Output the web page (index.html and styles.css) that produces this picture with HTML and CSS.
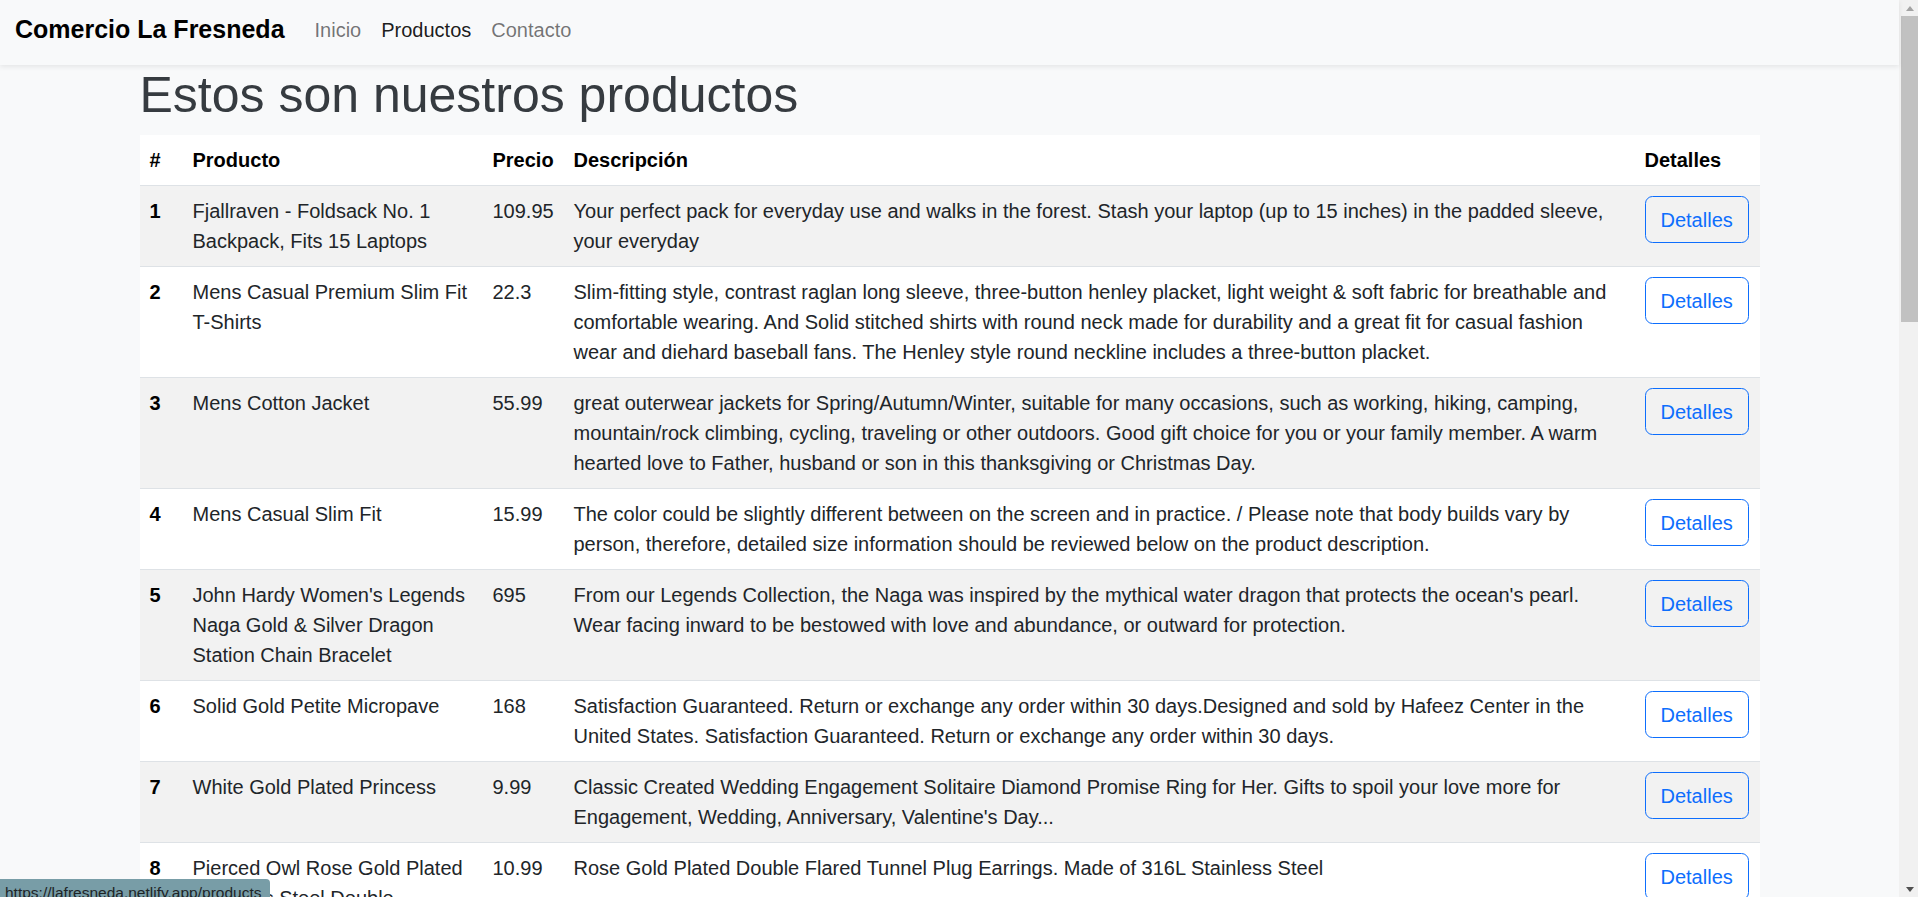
FILE: index.html
```html
<!DOCTYPE html>
<html lang="es">
<head>
<meta charset="utf-8">
<title>Comercio La Fresneda</title>
<link rel="stylesheet" href="styles.css">
</head>
<body>
<div class="page">
  <nav class="navbar">
    <a class="brand" href="#">Comercio La Fresneda</a>
    <a class="nav-link" href="#">Inicio</a>
    <a class="nav-link active" href="#">Productos</a>
    <a class="nav-link" href="#">Contacto</a>
  </nav>
  <main class="container">
    <h1 class="title">Estos son nuestros productos</h1>
    <table class="table">
      <colgroup>
        <col class="c-num"><col class="c-prod"><col class="c-price"><col class="c-desc"><col class="c-det">
      </colgroup>
      <thead>
        <tr><th>#</th><th>Producto</th><th>Precio</th><th>Descripción</th><th>Detalles</th></tr>
      </thead>
      <tbody>
        <tr><th>1</th><td>Fjallraven - Foldsack No. 1 Backpack, Fits 15 Laptops</td><td>109.95</td><td>Your perfect pack for everyday use and walks in the forest. Stash your laptop (up to 15 inches) in the padded sleeve, your everyday</td><td><button class="btn">Detalles</button></td></tr>
        <tr><th>2</th><td>Mens Casual Premium Slim Fit T-Shirts</td><td>22.3</td><td>Slim-fitting style, contrast raglan long sleeve, three-button henley placket, light weight &amp; soft fabric for breathable and comfortable wearing. And Solid stitched shirts with round neck made for durability and a great fit for casual fashion wear and diehard baseball fans. The Henley style round neckline includes a three-button placket.</td><td><button class="btn">Detalles</button></td></tr>
        <tr><th>3</th><td>Mens Cotton Jacket</td><td>55.99</td><td>great outerwear jackets for Spring/Autumn/Winter, suitable for many occasions, such as working, hiking, camping, mountain/rock climbing, cycling, traveling or other outdoors. Good gift choice for you or your family member. A warm hearted love to Father, husband or son in this thanksgiving or Christmas Day.</td><td><button class="btn">Detalles</button></td></tr>
        <tr><th>4</th><td>Mens Casual Slim Fit</td><td>15.99</td><td>The color could be slightly different between on the screen and in practice. / Please note that body builds vary by person, therefore, detailed size information should be reviewed below on the product description.</td><td><button class="btn">Detalles</button></td></tr>
        <tr><th>5</th><td>John Hardy Women's Legends Naga Gold &amp; Silver Dragon Station Chain Bracelet</td><td>695</td><td>From our Legends Collection, the Naga was inspired by the mythical water dragon that protects the ocean's pearl. Wear facing inward to be bestowed with love and abundance, or outward for protection.</td><td><button class="btn">Detalles</button></td></tr>
        <tr><th>6</th><td>Solid Gold Petite Micropave</td><td>168</td><td>Satisfaction Guaranteed. Return or exchange any order within 30 days.Designed and sold by Hafeez Center in the United States. Satisfaction Guaranteed. Return or exchange any order within 30 days.</td><td><button class="btn">Detalles</button></td></tr>
        <tr><th>7</th><td>White Gold Plated Princess</td><td>9.99</td><td>Classic Created Wedding Engagement Solitaire Diamond Promise Ring for Her. Gifts to spoil your love more for Engagement, Wedding, Anniversary, Valentine's Day...</td><td><button class="btn">Detalles</button></td></tr>
        <tr><th>8</th><td>Pierced Owl Rose Gold Plated Stainless Steel Double</td><td>10.99</td><td>Rose Gold Plated Double Flared Tunnel Plug Earrings. Made of 316L Stainless Steel</td><td><button class="btn">Detalles</button></td></tr>
        <tr><th>9</th><td>WD 2TB Elements Portable External Hard Drive - USB 3.0</td><td>64</td><td>USB 3.0 and USB 2.0 Compatibility Fast data transfers Improve PC Performance High Capacity; Compatibility Formatted NTFS for Windows 10, Windows 8.1, Windows 7; Reformatting may be required for other operating systems; Compatibility may vary depending on user’s hardware configuration and operating system</td><td><button class="btn">Detalles</button></td></tr>
        <tr><th>10</th><td>SanDisk SSD PLUS 1TB Internal SSD - SATA III 6 Gb/s</td><td>109</td><td>Easy upgrade for faster boot up, shutdown, application load and response (As compared to 5400 RPM SATA 2.5” hard drive; Based on published specifications and internal benchmarking tests using PCMark vantage scores) Boosts burst write performance, making it ideal for typical PC workloads The perfect balance of performance and reliability Read/write speeds of up to 535MB/s/450MB/s (Based on internal testing; Performance may vary depending upon drive capacity, host device, OS and application.)</td><td><button class="btn">Detalles</button></td></tr>
        <tr><th>11</th><td>Silicon Power 256GB SSD 3D NAND A55 SLC Cache Performance Boost SATA III 2.5</td><td>109</td><td>3D NAND flash are applied to deliver high transfer speeds Remarkable transfer speeds that enable faster bootup and improved overall system performance. The advanced SLC Cache Technology allows performance boost and longer lifespan 7mm slim design suitable for Ultrabooks and Ultra-slim notebooks. Supports TRIM command, Garbage Collection technology, RAID, and ECC (Error Checking &amp; Correction) to provide the optimized performance and enhanced reliability.</td><td><button class="btn">Detalles</button></td></tr>
        <tr><th>12</th><td>WD 4TB Gaming Drive Works with Playstation 4 Portable External Hard Drive</td><td>114</td><td>Expand your PS4 gaming experience, Play anywhere Fast and easy, setup Sleek design with high capacity, 3-year manufacturer's limited warranty</td><td><button class="btn">Detalles</button></td></tr>
        <tr><th>13</th><td>Acer SB220Q bi 21.5 inches Full HD (1920 x 1080) IPS Ultra-Thin</td><td>599</td><td>21. 5 inches Full HD (1920 x 1080) widescreen IPS display And Radeon free Sync technology. No compatibility for VESA Mount Refresh Rate: 75Hz - Using HDMI port Zero-frame design | ultra-thin | 4ms response time | IPS panel Aspect ratio - 16: 9. Color Supported - 16. 7 million colors. Brightness - 250 nit Tilt angle -5 degree to 15 degree. Horizontal viewing angle-178 degree. Vertical viewing angle-178 degree 75 hertz</td><td><button class="btn">Detalles</button></td></tr>
        <tr><th>14</th><td>Samsung 49-Inch CHG90 144Hz Curved Gaming Monitor (LC49HG90DMNXZA) – Super Ultrawide Screen QLED</td><td>999.99</td><td>49 INCH SUPER ULTRAWIDE 32:9 CURVED GAMING MONITOR with dual 27 inch screen side by side QUANTUM DOT (QLED) TECHNOLOGY, HDR support and factory calibration provides stunningly realistic and accurate color and contrast 144HZ HIGH REFRESH RATE and 1ms ultra fast response time work to eliminate motion blur, ghosting, and reduce input lag</td><td><button class="btn">Detalles</button></td></tr>
        <tr><th>15</th><td>BIYLACLESEN Women's 3-in-1 Snowboard Jacket Winter Coats</td><td>56.99</td><td>Note:The Jackets is US standard size, Please choose size as your usual wear Material: 100% Polyester; Detachable Liner Fabric: Warm Fleece. Detachable Functional Liner: Skin Friendly, Lightweigt and Warm.Stand Collar Liner jacket, keep you warm in cold weather.</td><td><button class="btn">Detalles</button></td></tr>
        <tr><th>16</th><td>Lock and Love Women's Removable Hooded Faux Leather Moto Biker Jacket</td><td>29.95</td><td>100% POLYURETHANE(shell) 100% POLYESTER(lining) 75% POLYESTER 25% COTTON (SWEATER), Faux leather material for style and comfort / 2 pockets of front, 2-For-One Hooded denim style faux leather jacket, Button detail on waist / Detail stitching at sides, HAND WASH ONLY / DO NOT BLEACH / LINE DRY / DO NOT IRON</td><td><button class="btn">Detalles</button></td></tr>
        <tr><th>17</th><td>Rain Jacket Women Windbreaker Striped Climbing Raincoats</td><td>39.99</td><td>Lightweight perfet for trip or casual wear---Long sleeve with hooded, adjustable drawstring waist design. Button and zipper front closure raincoat, fully stripes Lined and The Raincoat has 2 side pockets are a good size to hold all kinds of things, it covers the hips, and the hood is generous but doesn't overdo it.Attached Cotton Lined Hood with Adjustable Drawstrings give it a real styled look.</td><td><button class="btn">Detalles</button></td></tr>
        <tr><th>18</th><td>MBJ Women's Solid Short Sleeve Boat Neck V</td><td>9.85</td><td>95% RAYON 5% SPANDEX, Made in USA or Imported, Do Not Bleach, Lightweight fabric with great stretch for comfort, Ribbed on sleeves and neckline / Double stitching on bottom hem</td><td><button class="btn">Detalles</button></td></tr>
        <tr><th>19</th><td>Opna Women's Short Sleeve Moisture</td><td>7.95</td><td>100% Polyester, Machine wash, 100% cationic polyester interlock, Machine Wash &amp; Pre Shrunk for a Great Fit, Lightweight, roomy and highly breathable with moisture wicking fabric which helps to keep moisture away, Soft Lightweight Fabric with comfortable V-neck collar and a slimmer fit, delivers a sleek, more feminine silhouette and Added Comfort</td><td><button class="btn">Detalles</button></td></tr>
        <tr><th>20</th><td>DANVOUY Womens T Shirt Casual Cotton Short</td><td>12.99</td><td>95%Cotton,5%Spandex, Features: Casual, Short Sleeve, Letter Print,V-Neck,Fashion Tees, The fabric is soft and has some stretch., Occasion: Casual/Office/Beach/School/Home/Street. Season: Spring,Summer,Autumn,Winter.</td><td><button class="btn">Detalles</button></td></tr>
      </tbody>
    </table>
  </main>
</div>
<div class="scrollbar" aria-hidden="true">
  <div class="sb-button"><span class="sb-arrow-up"></span></div>
  <div class="sb-thumb"></div>
  <div class="sb-space"></div>
  <div class="sb-button"><span class="sb-arrow-down"></span></div>
</div>
<div class="status-bubble">https://lafresneda.netlify.app/products</div>
</body>
</html>
```

FILE: styles.css
```css
html {
  background: #f8f9fa;
}

body {
  margin: 0;
  display: flex;
  align-items: flex-start;
  background: #f8f9fa;
  font-family: "Liberation Sans", Arial, sans-serif;
  font-size: 20px;
  line-height: 1.5;
  color: #212529;
}

.page {
  flex: 1;
  min-width: 0;
}

/* drawn browser scrollbar */
.scrollbar {
  position: sticky;
  top: 0;
  flex: none;
  width: 19px;
  height: 100vh;
  display: flex;
  flex-direction: column;
  background: #f1f1f1;
}

.sb-button {
  flex: none;
  height: 16px;
  display: flex;
  align-items: center;
  justify-content: center;
}

.sb-arrow-up {
  width: 0;
  height: 0;
  margin-left: 2px;
  border-left: 4.5px solid transparent;
  border-right: 4.5px solid transparent;
  border-bottom: 5px solid #a3a3a3;
}

.sb-arrow-down {
  width: 0;
  height: 0;
  margin-left: 2px;
  border-left: 4.5px solid transparent;
  border-right: 4.5px solid transparent;
  border-top: 5px solid #505050;
}

.sb-thumb {
  flex: none;
  height: 306px;
  margin-left: 2px;
  background: #c1c1c1;
}

.sb-space {
  flex: 1;
}

.navbar {
  position: relative;
  z-index: 2;
  display: flex;
  align-items: center;
  height: 65px;
  box-sizing: border-box;
  padding: 0 15px 6px;
  background: #f8f9fa;
  box-shadow: 0 2px 5px rgba(0, 0, 0, 0.08);
}

.brand {
  font-size: 25px;
  line-height: 37.5px;
  font-weight: bold;
  color: #000;
  text-decoration: none;
  margin-right: 20px;
}

.nav-link {
  padding: 0 10px;
  line-height: 30px;
  color: rgba(0, 0, 0, 0.55);
  text-decoration: none;
}

.nav-link.active {
  color: rgba(0, 0, 0, 0.9);
}

.container {
  max-width: 1620px;
  margin: 0 auto;
}

.title {
  margin: 0 0 10px;
  font-size: 50px;
  line-height: 1.2;
  font-weight: normal;
  color: #363b40;
}

.table {
  width: 100%;
  table-layout: fixed;
  border-collapse: collapse;
  background: #fff;
  margin-bottom: 20px;
}

.c-num { width: 43px; }
.c-prod { width: 300px; }
.c-price { width: 81px; }
.c-desc { width: 1071px; }
.c-det { width: 125px; }

.table th,
.table td {
  padding: 10px;
  text-align: left;
  vertical-align: top;
  border-bottom: 1px solid #dee2e6;
}

.table th {
  font-weight: bold;
  color: #000;
}

.table tbody tr:nth-child(odd) > * {
  background: #f2f2f2;
}

.btn {
  display: inline-block;
  padding: 7.5px 15px;
  font-family: inherit;
  font-size: 20px;
  line-height: 30px;
  color: #0d6efd;
  background: transparent;
  border: 1px solid #0d6efd;
  border-radius: 7.5px;
  cursor: pointer;
}

.status-bubble {
  position: fixed;
  left: 0;
  bottom: 0;
  z-index: 5;
  height: 18px;
  box-sizing: border-box;
  padding: 3px 9px 0 5px;
  font-size: 15.5px;
  line-height: 22px;
  color: #1e2426;
  background: #789da7;
  border-top-right-radius: 4px;
  overflow: hidden;
  white-space: nowrap;
}
```
